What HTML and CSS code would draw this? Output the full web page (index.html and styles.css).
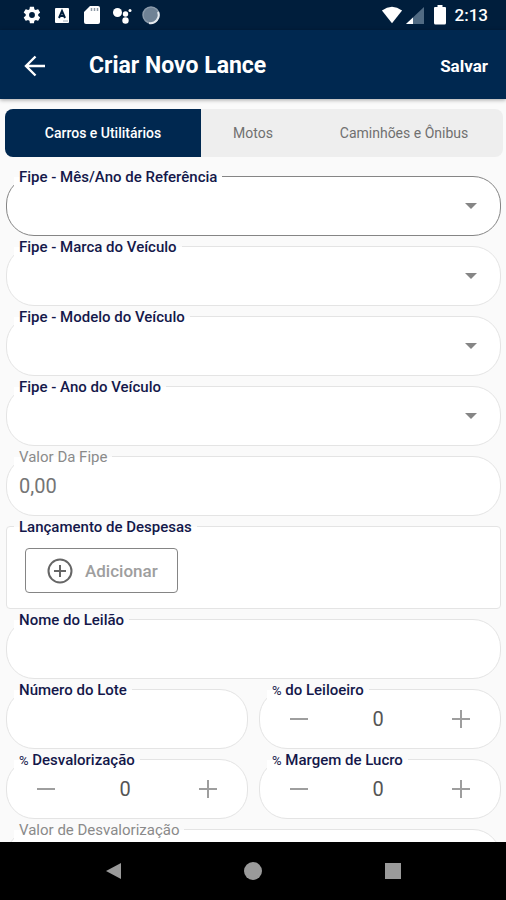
FILE: index.html
```html
<!DOCTYPE html>
<html lang="pt-BR">
<head>
<meta charset="utf-8">
<meta name="viewport" content="width=device-width, initial-scale=1">
<title>Criar Novo Lance</title>
<link rel="stylesheet" href="styles.css">
</head>
<body>
<div class="status">
  <div class="status-left">
    <svg width="20" height="20" viewBox="0 0 24 24" fill="#fff"><path d="M19.4 13c0-.3.1-.6.1-1s0-.7-.1-1l2.1-1.6c.2-.2.3-.4.1-.7l-2-3.4c-.1-.2-.4-.3-.6-.2l-2.5 1c-.5-.4-1.100-.7-1.700-1l-.4-2.600c0-.3-.2-.5-.5-.5h-4c-.2 0-.5.200-.5.500L9 5.100c-.6.300-1.200.600-1.700 1l-2.500-1c-.2-.1-.5 0-.6.200l-2 3.400c-.1.300-.1.500.1.700L4.500 11c0 .3-.1.700-.1 1s0 .7.100 1l-2.200 1.600c-.2.200-.2.400-.1.700l2 3.400c.1.200.4.300.6.200l2.500-1c.5.400 1.100.700 1.700 1l.4 2.600c0 .3.300.500.500.500h4c.3 0 .5-.2.500-.5l.4-2.600c.6-.3 1.200-.6 1.700-1l2.500 1c.2.100.500 0 .6-.2l2-3.400c.1-.3.100-.5-.1-.7zM12 15.500a3.500 3.500 0 1 1 0-7 3.500 3.500 0 0 1 0 7z"/></svg>
    <svg width="20" height="20" viewBox="0 0 20 20"><rect x="3" y="3" width="14" height="15" rx="1" fill="#fff"/><path d="M7 13l3-7 3 7M8 11h4" fill="none" stroke="#001e3c" stroke-width="2"/><path d="M11 16h5" stroke="#9aa8b5"/></svg>
    <svg width="20" height="20" viewBox="0 0 20 20"><path d="M8 1h8q2 0 2 2v14q0 2-2 2H4q-2 0-2-2V7z" fill="#fff"/><path d="M9.500 3v3M12.500 3v3M15.500 3v3" stroke="#8e9aa6" stroke-width="1.500"/></svg>
    <svg width="20" height="20" viewBox="0 0 20 20" fill="#fff"><circle cx="5.500" cy="7.500" r="4.500"/><circle cx="13.500" cy="9" r="2.700"/><circle cx="13.500" cy="15.500" r="3.200"/><circle cx="18" cy="5.500" r="1.500"/></svg>
    <svg width="20" height="20" viewBox="0 0 20 20"><circle cx="9" cy="10" r="8" fill="#6f8295" stroke="#8b9bab" stroke-width="1.500"/><path d="M16 7a8 8 0 0 1-9 11" fill="none" stroke="#e3e8ed" stroke-width="2"/></svg>
  </div>
  <div class="status-right">
    <svg width="22" height="20" viewBox="0 0 24 20"><path d="M1 5Q12-3 23 5L12 19z" fill="#fff"/></svg>
    <svg width="20" height="20" viewBox="0 0 20 20"><path d="M19 2v17H1z" fill="#516b83"/><path d="M8 12.500V19H1z" fill="#fff"/></svg>
    <svg class="battery" width="12" height="20" viewBox="0 0 12 20"><path d="M3.500 0h5v2H11q1 0 1 1v15q0 1.500-1.500 1.500h-9Q0 19.500 0 18V3q0-1 1-1h2.500z" fill="#fff"/></svg>
    <time>2:13</time>
  </div>
</div>
<header class="appbar">
  <button class="back" type="button" aria-label="Voltar"><svg width="22" height="22" viewBox="0 0 22 22" fill="none" stroke="#fff" stroke-width="2.400"><path d="M21 11H3M11.500 1.500L2 11l9.500 9.500"/></svg></button>
  <h1>Criar Novo Lance</h1>
  <button class="save" type="button">Salvar</button>
</header>
<main>
  <div class="tabs" role="tablist">
    <button class="tab selected" type="button" role="tab" aria-selected="true">Carros e Utilitários</button>
    <button class="tab" type="button" role="tab" aria-selected="false">Motos</button>
    <button class="tab" type="button" role="tab" aria-selected="false">Caminhões e Ônibus</button>
  </div>
  <form class="form">
    <div class="field focus"><label for="ref">Fipe - Mês/Ano de Referência</label><select id="ref"><option></option></select><svg class="caret" viewBox="0 0 12 6"><path d="M0 0h12L6 6z"/></svg></div>
    <div class="field"><label for="marca">Fipe - Marca do Veículo</label><select id="marca"><option></option></select><svg class="caret" viewBox="0 0 12 6"><path d="M0 0h12L6 6z"/></svg></div>
    <div class="field"><label for="modelo">Fipe - Modelo do Veículo</label><select id="modelo"><option></option></select><svg class="caret" viewBox="0 0 12 6"><path d="M0 0h12L6 6z"/></svg></div>
    <div class="field"><label for="ano">Fipe - Ano do Veículo</label><select id="ano"><option></option></select><svg class="caret" viewBox="0 0 12 6"><path d="M0 0h12L6 6z"/></svg></div>
    <div class="field muted"><label for="valor">Valor Da Fipe</label><input id="valor" type="text" value="0,00" readonly></div>
    <div class="field expenses" role="group" aria-labelledby="despesas">
      <span class="label" id="despesas">Lançamento de Despesas</span>
      <button class="add" type="button"><svg width="26" height="26" viewBox="0 0 26 26" fill="none" stroke="#666" stroke-width="2"><circle cx="13" cy="13" r="11.500"/><path d="M13 7v12M7 13h12"/></svg>Adicionar</button>
    </div>
    <div class="field"><label for="nome">Nome do Leilão</label><input id="nome" type="text"></div>
    <div class="pair">
      <div class="field"><label for="lote">Número do Lote</label><input id="lote" type="text"></div>
      <div class="field stepper"><label for="leiloeiro"><span class="percent">%</span> do Leiloeiro</label>
        <button type="button" aria-label="Diminuir"><svg viewBox="0 0 18 18"><path d="M0 9h18"/></svg></button><input id="leiloeiro" type="text" value="0"><button type="button" aria-label="Aumentar"><svg viewBox="0 0 18 18"><path d="M0 9h18M9 0v18"/></svg></button></div>
    </div>
    <div class="pair">
      <div class="field stepper"><label for="desv"><span class="percent">%</span> Desvalorização</label>
        <button type="button" aria-label="Diminuir"><svg viewBox="0 0 18 18"><path d="M0 9h18"/></svg></button><input id="desv" type="text" value="0"><button type="button" aria-label="Aumentar"><svg viewBox="0 0 18 18"><path d="M0 9h18M9 0v18"/></svg></button></div>
      <div class="field stepper"><label for="margem"><span class="percent">%</span> Margem de Lucro</label>
        <button type="button" aria-label="Diminuir"><svg viewBox="0 0 18 18"><path d="M0 9h18"/></svg></button><input id="margem" type="text" value="0"><button type="button" aria-label="Aumentar"><svg viewBox="0 0 18 18"><path d="M0 9h18M9 0v18"/></svg></button></div>
    </div>
    <div class="field muted"><label for="vdesv">Valor de Desvalorização</label><input id="vdesv" type="text" readonly></div>
  </form>
</main>
<nav class="sysnav">
  <button type="button" aria-label="Voltar"><svg viewBox="0 0 18 18"><path d="M17 1v16L2 9z"/></svg></button>
  <button type="button" aria-label="Início"><svg viewBox="0 0 18 18"><circle cx="9" cy="9" r="9"/></svg></button>
  <button type="button" aria-label="Recentes"><svg viewBox="0 0 18 18"><path d="M1 1h16v16H1z"/></svg></button>
</nav>
</body>
</html>
```
FILE: styles.css
```css
* { box-sizing: border-box; }
body {
  margin: 0;
  height: 100vh;
  display: flex;
  flex-direction: column;
  background: #fafafa;
  font-family: Roboto, "Liberation Sans", sans-serif;
}
button, input, select { font: inherit; border: 0; padding: 0; background: none; color: inherit; }
button { cursor: pointer; }
svg { display: block; flex: none; }

.status {
  flex: none;
  height: 30px;
  padding: 0 18px 0 22px;
  display: flex;
  align-items: center;
  justify-content: space-between;
  background: #001e3c;
  color: #fff;
}
.status-left { display: flex; gap: 10px; }
.status-right { display: flex; align-items: center; gap: 2px; }
.status .battery { margin: 0 7px; }
.status time { font-size: 17px; font-weight: 500; line-height: 20px; }

.appbar {
  flex: none;
  height: 69px;
  padding: 2px 18px 0 24px;
  display: flex;
  align-items: center;
  background: #002850;
  color: #fff;
  box-shadow: 0 1px 4px rgba(0, 0, 0, .35);
  position: relative;
}
.appbar h1 { flex: 1; margin: 0 0 0 43px; font-size: 23px; line-height: 28px; font-weight: 700; }
.save { font-size: 17px; font-weight: 700; }

main { flex: 1; min-height: 0; overflow: hidden; padding: 10px 3px 0 5px; }
.tabs {
  display: grid;
  grid-template-columns: 196fr 104fr 198fr;
  height: 48px;
  border-radius: 8px;
  overflow: hidden;
  background: #eee;
}
.tab { font-size: 14px; font-weight: 400; color: #707070; }
.tab.selected { background: #002850; color: #fff; font-weight: 500; }

.form { display: flex; flex-direction: column; gap: 10px; padding: 19px 2px 0 1px; }
.pair { display: grid; grid-template-columns: 1fr 1fr; gap: 11px; }
.field {
  position: relative;
  display: flex;
  align-items: center;
  height: 60px;
  border: 1px solid #e4e4e4;
  border-radius: 28px;
  background: #fff;
}
.field.focus { border-color: #858585; }
.field label, .field .label {
  position: absolute;
  top: -9px;
  left: 7px;
  padding: 0 5px;
  font-size: 15px;
  line-height: 18px;
  font-weight: 500;
  color: #14184a;
  white-space: nowrap;
  background: linear-gradient(#fafafa 50%, #fff 50%);
}
.field.muted label { font-weight: 400; color: #8a8a8a; }
.percent { font-weight: 400; font-size: 13px; }
.field input, .field select {
  width: 100%;
  height: 100%;
  padding: 0 12px;
  border-radius: 28px;
  font-size: 20px;
  color: #757575;
}
.field select { appearance: none; }
.caret { position: absolute; right: 23px; width: 12px; height: 6px; fill: #858585; pointer-events: none; }

.field.expenses { height: 83px; border-radius: 4px; padding: 6px 18px 0; }
.add {
  display: flex;
  align-items: center;
  gap: 12px;
  height: 45px;
  padding: 0 19px 0 21px;
  border: 1px solid #858585;
  border-radius: 4px;
  font-size: 17px;
  font-weight: 500;
  color: #9e9e9e;
}

.stepper { padding: 0 19px; }
.field.stepper input { flex: 1; min-width: 0; padding: 0 16px 0 12px; text-align: center; color: #555; }
.stepper button { flex: none; width: 40px; height: 40px; display: grid; place-items: center; }
.stepper svg { width: 18px; height: 18px; stroke: #9e9e9e; stroke-width: 2; fill: none; }

.sysnav {
  flex: none;
  height: 58px;
  padding: 0 43px;
  display: grid;
  grid-template-columns: repeat(3, 1fr);
  background: #000;
}
.sysnav button { display: grid; place-items: center; }
.sysnav svg { width: 18px; height: 18px; fill: #9a9a9a; }
```
